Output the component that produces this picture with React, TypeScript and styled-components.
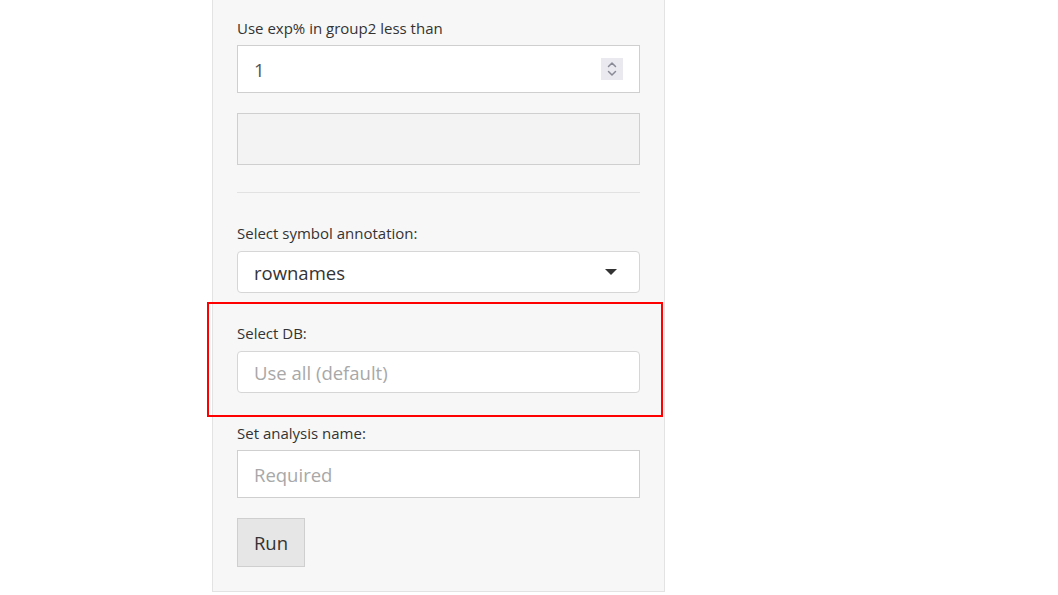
import React from "react";
import styled, { createGlobalStyle } from "styled-components";

const Global = createGlobalStyle`
  html, body { margin: 0; padding: 0; background: #ffffff; }
  body { font-family: "Open Sans", "Liberation Sans", sans-serif; color: #333; }
`;

const Page = styled.div`
  width: 1058px;
  height: 595px;
  overflow: hidden;
  display: flex;
  align-items: flex-start;
  padding-left: 212px;
  box-sizing: border-box;
`;

const Panel = styled.div`
  width: 453px;
  box-sizing: border-box;
  background: #f7f7f7;
  border: 1px solid #e3e3e3;
  border-top: none;
  padding: 18px 24px 24px 24px;
  display: flex;
  flex-direction: column;
`;

const Group = styled.div<{ $top?: number }>`
  display: flex;
  flex-direction: column;
  margin-top: ${(p) => p.$top ?? 0}px;
`;

const Label = styled.label<{ $gap?: number }>`
  font-size: 15px;
  line-height: 20px;
  color: #333;
  margin-bottom: ${(p) => p.$gap ?? 7}px;
`;

const Field = styled.div<{ $h: number; $round?: boolean; $muted?: boolean }>`
  height: ${(p) => p.$h}px;
  box-sizing: border-box;
  border: 1px solid ${(p) => (p.$round ? "#d6d6d6" : "#cfcfcf")};
  border-radius: ${(p) => (p.$round ? 4 : 0)}px;
  background: ${(p) => (p.$muted ? "#f3f3f3" : "#ffffff")};
  display: flex;
  align-items: center;
  justify-content: space-between;
  padding: 0 16px 0 16px;
  font-size: 18.5px;
  color: #555;
`;

const Value = styled.span<{ $dark?: boolean }>`
  color: ${(p) => (p.$dark ? "#333" : "#555")};
`;

const Placeholder = styled.span`
  color: #a8a8a8;
`;

const Spinner = styled.div`
  width: 22px;
  height: 22px;
  background: #e9e9ef;
  display: flex;
  align-items: center;
  justify-content: center;
`;

const Caret = styled.div`
  width: 0;
  height: 0;
  border-left: 6px solid transparent;
  border-right: 6px solid transparent;
  border-top: 6px solid #333;
  margin-right: 6px;
`;

const Rule = styled.hr`
  border: none;
  border-top: 1px solid #e2e2e2;
  margin: 27px 0 0 0;
  height: 0;
`;

const Highlight = styled.div`
  margin: 9px -23px 0 -30px;
  border: 2px solid #ff0000;
  padding: 19px 21px 22px 28px;
  display: flex;
  flex-direction: column;
`;

const Button = styled.button`
  margin-top: 20px;
  align-self: flex-start;
  width: 68px;
  height: 49px;
  box-sizing: border-box;
  background: #e6e6e6;
  border: 1px solid #cfcfcf;
  border-radius: 0;
  font-family: "Open Sans", "Liberation Sans", sans-serif;
  font-size: 18.5px;
  color: #333;
  padding: 0;
`;

export default function App() {
  return (
    <>
      <Global />
      <Page>
        <Panel>
          <Group>
            <Label>Use exp% in group2 less than</Label>
            <Field $h={48}>
              <Value>1</Value>
              <Spinner>
                <svg width="14" height="18" viewBox="0 0 14 18" fill="none" stroke="#8a8a96" strokeWidth="1.5" strokeLinecap="round" strokeLinejoin="round">
                  <path d="M3.5 6.5 L7 3 L10.5 6.5" />
                  <path d="M3.5 11.5 L7 15 L10.5 11.5" />
                </svg>
              </Spinner>
            </Field>
          </Group>
          <Group $top={20}>
            <Field $h={52} $muted />
          </Group>
          <Rule />
          <Group $top={30}>
            <Label $gap={8}>Select symbol annotation:</Label>
            <Field $h={42} $round>
              <Value $dark>rownames</Value>
              <Caret />
            </Field>
          </Group>
          <Highlight>
            <Label $gap={8}>Select DB:</Label>
            <Field $h={42} $round>
              <Placeholder>Use all (default)</Placeholder>
            </Field>
          </Highlight>
          <Group $top={6}>
            <Label>Set analysis name:</Label>
            <Field $h={48}>
              <Placeholder>Required</Placeholder>
            </Field>
          </Group>
          <Button>Run</Button>
        </Panel>
      </Page>
    </>
  );
}
